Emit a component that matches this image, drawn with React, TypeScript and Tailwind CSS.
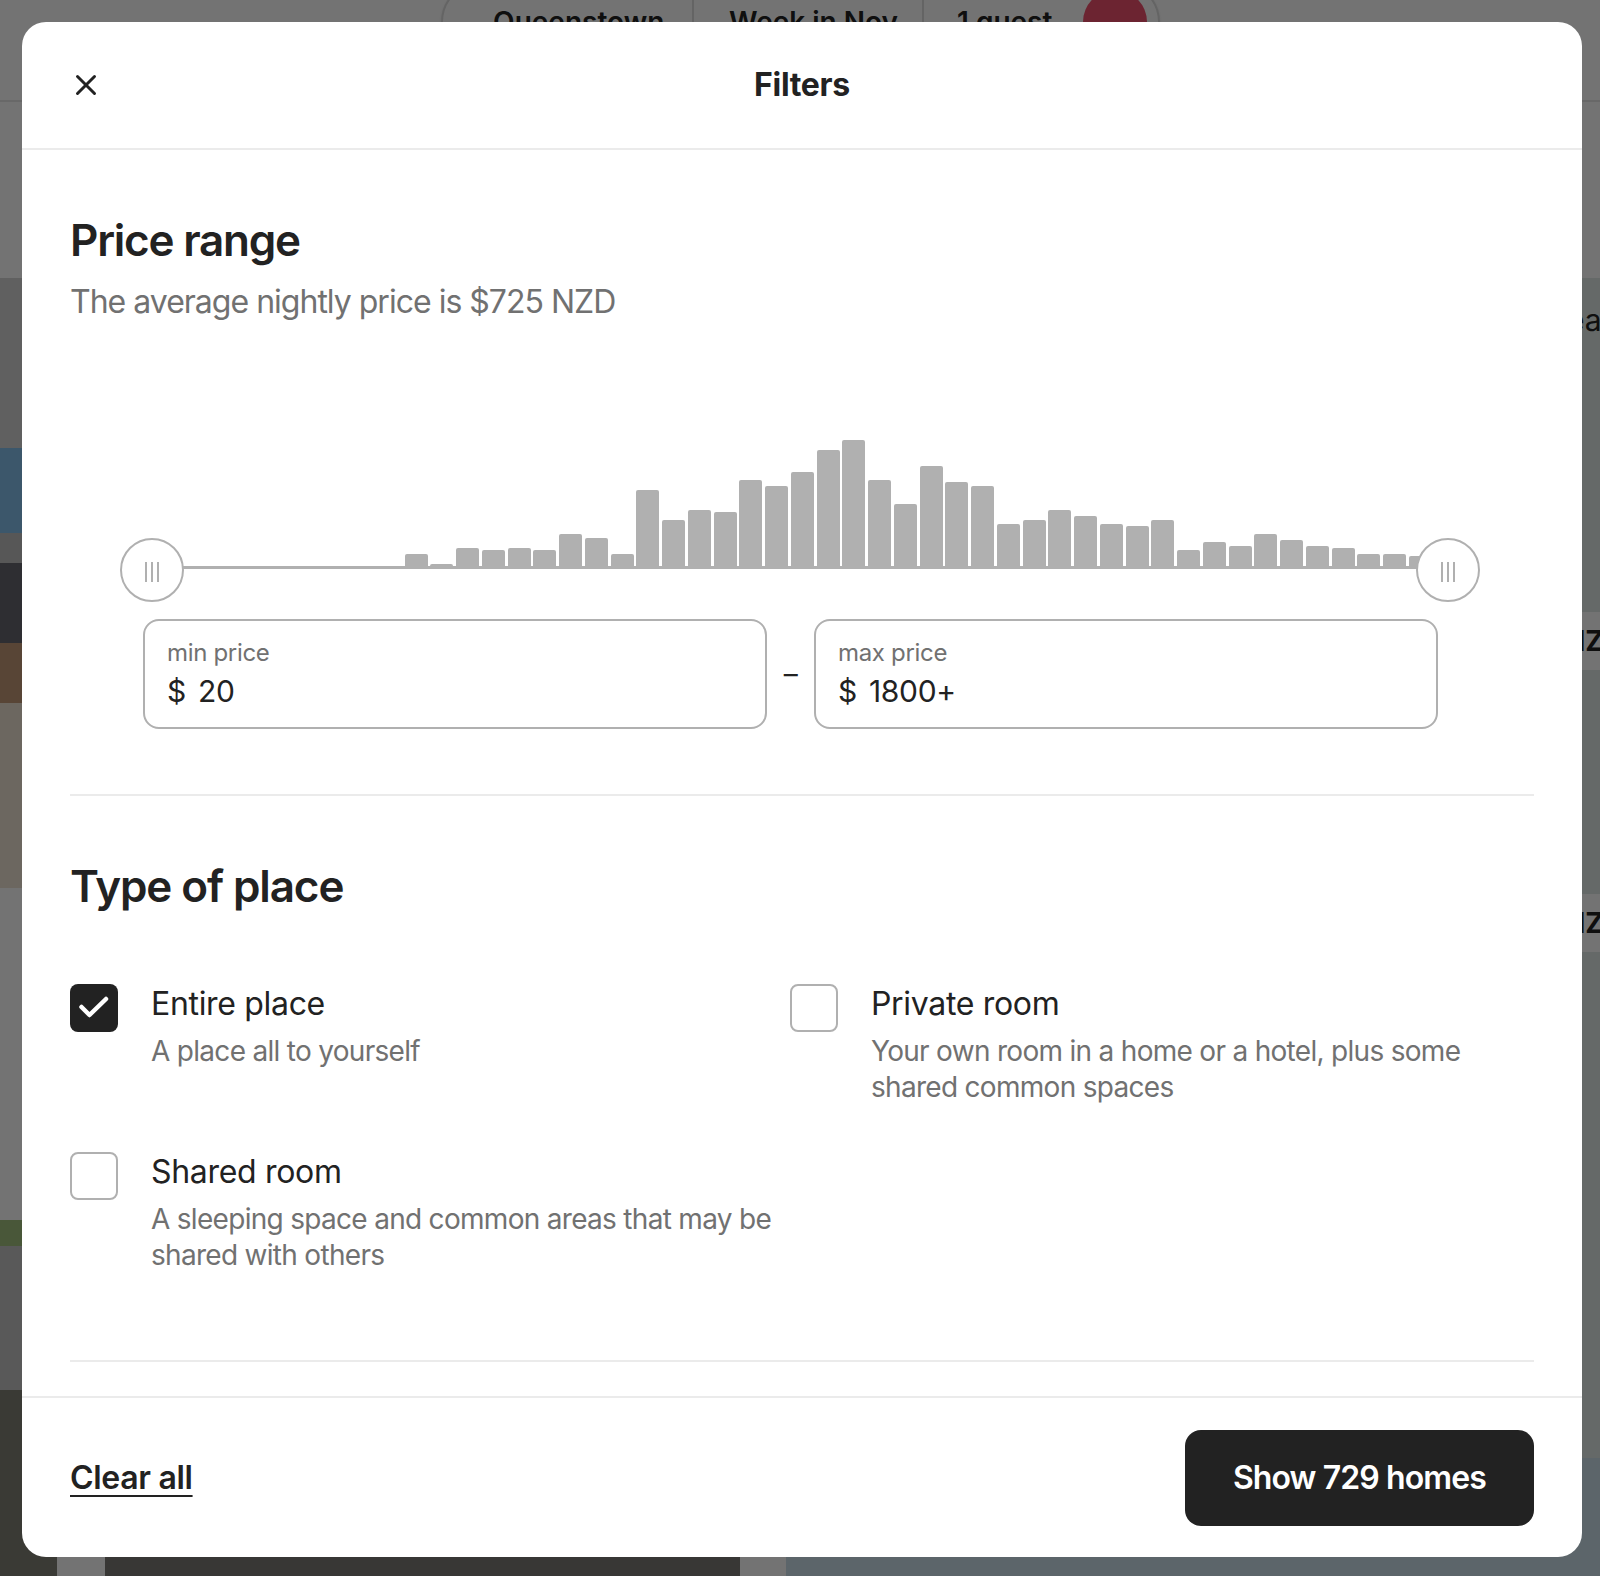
import { X } from "lucide-react";

const bars = [
  12, 2, 18, 16, 18, 16, 32, 28, 12, 76, 46, 56, 54, 86, 80, 94, 116, 126, 86,
  62, 100, 84, 80, 42, 46, 56, 50, 42, 40, 46, 16, 24, 20, 32, 26, 20, 18, 12,
  12, 10,
];

function Handle({ className }: { className: string }) {
  return (
    <div
      className={`absolute top-[102px] flex h-[64px] w-[64px] items-center justify-center gap-[4px] rounded-full border-2 border-[#b0b0b0] bg-white pt-[4px] ${className}`}
    >
      <span className="h-[20px] w-[2px] bg-[#b0b0b0]" />
      <span className="h-[20px] w-[2px] bg-[#b0b0b0]" />
      <span className="h-[20px] w-[2px] bg-[#b0b0b0]" />
    </div>
  );
}

function PriceBox({ label, value }: { label: string; value: string }) {
  return (
    <div className="h-[110px] flex-1 rounded-[16px] border-2 border-[#b0b0b0] px-[22px] pt-[16px]">
      <div className="text-[24px] leading-[32px] text-[#717171]">{label}</div>
      <div className="mt-[4px] flex gap-[12px] text-[30px] leading-[36px] text-[#222222]">
        <span>$</span>
        <span>{value}</span>
      </div>
    </div>
  );
}

function Option({
  title,
  lines,
  checked = false,
}: {
  title: string;
  lines: string[];
  checked?: boolean;
}) {
  return (
    <div className="flex gap-[33px]">
      {checked ? (
        <div className="flex h-[48px] w-[48px] shrink-0 items-center justify-center rounded-[8px] bg-[#222222]">
          <svg width="48" height="48" viewBox="0 0 48 48" fill="none">
            <path
              d="M11.5 23l8 8L36 15"
              stroke="white"
              strokeWidth="4.5"
              strokeLinecap="round"
              strokeLinejoin="round"
            />
          </svg>
        </div>
      ) : (
        <div className="h-[48px] w-[48px] shrink-0 rounded-[8px] border-2 border-[#b0b0b0]" />
      )}
      <div>
        <div className="text-[32px] leading-[40px] text-[#222222]">{title}</div>
        <div className="mt-[9px] whitespace-nowrap text-[28px] leading-[36px] tracking-[-0.025em] text-[#717171]">
          {lines.map((l) => (
            <div key={l}>{l}</div>
          ))}
        </div>
      </div>
    </div>
  );
}

function BackgroundPage() {
  return (
    <div className="h-full w-full">
      {/* top bar with search pill */}
      <header className="flex h-[102px] items-start border-b-2 border-[#e6e6e6]">
        <div className="ml-[441px] -mt-[18px] flex h-[80px] w-[719px] items-center rounded-full border-2 border-[#dddddd] text-[28px] font-semibold text-[#222222] shadow">
          <div className="w-[249px] pl-[50px]">Queenstown</div>
          <div className="h-[48px] w-[2px] bg-[#dddddd]" />
          <div className="w-[228px] pl-[35px]">Week in Nov</div>
          <div className="h-[48px] w-[2px] bg-[#dddddd]" />
          <div className="w-[159px] pl-[33px]">1 guest</div>
          <div className="h-[64px] w-[64px] rounded-full bg-[#f0506e]" />
        </div>
      </header>
      <div className="h-[176px]" />
      <div className="flex">
        {/* listings */}
        <div className="flex w-[786px] gap-[48px] overflow-hidden">
          <div className="-ml-[578px] w-[635px] shrink-0">
            <div className="flex h-[610px] flex-col overflow-hidden rounded-[24px]">
              <div className="h-[170px] bg-[#d6d6d6]" />
              <div className="h-[85px] bg-[#86c2ee]" />
              <div className="h-[30px] bg-[#c2c2c2]" />
              <div className="h-[80px] bg-[#66666f]" />
              <div className="h-[60px] bg-[#c49a78]" />
              <div className="flex-1 bg-[#f0e4d4]" />
            </div>
            <div className="mt-[26px] text-[30px] font-semibold leading-[40px] text-[#222222]">
              Nelson Lakes cottage
            </div>
            <div className="h-[266px]" />
            <div className="flex h-[610px] flex-col overflow-hidden rounded-[24px]">
              <div className="h-[26px] bg-[#a3c27f]" />
              <div className="h-[144px] bg-[#c6c6c6]" />
              <div className="flex-1 bg-[#818176]" />
            </div>
          </div>
          <div className="w-[635px] shrink-0">
            <div className="h-[610px] rounded-[24px] bg-[#cfcac2]" />
            <div className="h-[330px]" />
            <div className="h-[610px] rounded-[24px] bg-[#7d7a76]" />
          </div>
        </div>
        {/* map */}
        <div className="relative h-[1300px] flex-1 bg-[#dfe9e6]">
          <div className="absolute left-[764px] top-[20px] text-[30px] text-[#222222]">
            Lea
          </div>
          <div className="absolute left-[758px] top-[334px] rounded-full bg-white px-[20px] py-[8px] text-[28px] font-bold text-[#222222]">
            NZ$512
          </div>
          <div className="absolute left-[758px] top-[616px] rounded-full bg-white px-[20px] py-[8px] text-[28px] font-bold text-[#222222]">
            NZ$690
          </div>
          <div className="absolute bottom-0 left-0 h-[120px] w-full bg-[#cde0ea]" />
        </div>
      </div>
    </div>
  );
}

export default function App() {
  return (
    <div className="relative h-[1576px] w-[1600px] overflow-hidden bg-white font-['Inter','Noto_Sans',sans-serif]">
      <BackgroundPage />

      <div className="absolute inset-0 bg-black/[0.55] pl-[22px] pt-[22px]">
        <div className="flex h-[1535px] w-[1560px] flex-col overflow-hidden rounded-[24px] bg-white tracking-[-0.02em]">
          {/* header */}
          <header className="grid h-[128px] shrink-0 grid-cols-[1fr_auto_1fr] items-center border-b-2 border-[#ebebeb] px-[32px]">
            <button className="flex h-[64px] w-[64px] items-center justify-center rounded-full text-[#222222]">
              <X size={34} strokeWidth={2.1} />
            </button>
            <h1 className="text-[32px] font-bold text-[#222222]">Filters</h1>
            <div />
          </header>

          {/* body */}
          <div className="flex-1 overflow-hidden px-[48px]">
            {/* price range */}
            <section className="border-b-2 border-[#ebebeb] pb-[65px] pt-[64px]">
              <h2 className="text-[44px] font-semibold leading-[52px] tracking-[-0.028em] text-[#222222]">
                Price range
              </h2>
              <p className="mt-[16px] text-[32px] leading-[40px] tracking-[-0.031em] text-[#717171]">
                The average nightly price is $725 NZD
              </p>

              <div className="relative mt-[114px]">
                <div className="ml-[334.5px] flex h-[130px] items-end gap-[2.75px]">
                  {bars.map((h, i) => (
                    <div
                      key={i}
                      className="w-[23px] rounded-t-[2px] bg-[#b0b0b0]"
                      style={{ height: h }}
                    />
                  ))}
                </div>
                <div className="ml-[82px] mr-[86px] h-[3px] bg-[#b0b0b0]" />
                <Handle className="left-[50px]" />
                <Handle className="right-[54px]" />
              </div>

              <div className="ml-[73px] mr-[96px] mt-[50px] flex items-center">
                <PriceBox label="min price" value="20" />
                <div className="flex w-[47px] justify-center text-[28px] text-[#222222]">
                  –
                </div>
                <PriceBox label="max price" value="1800+" />
              </div>
            </section>

            {/* type of place */}
            <section className="border-b-2 border-[#ebebeb] pb-[87px] pt-[64px]">
              <h2 className="text-[44px] font-semibold leading-[52px] tracking-[-0.025em] text-[#222222]">
                Type of place
              </h2>
              <div className="mt-[72px] grid grid-cols-[720px_1fr] gap-y-[47px]">
                <Option
                  checked
                  title="Entire place"
                  lines={["A place all to yourself"]}
                />
                <Option
                  title="Private room"
                  lines={[
                    "Your own room in a home or a hotel, plus some",
                    "shared common spaces",
                  ]}
                />
                <Option
                  title="Shared room"
                  lines={[
                    "A sleeping space and common areas that may be",
                    "shared with others",
                  ]}
                />
              </div>
            </section>
          </div>

          {/* footer */}
          <footer className="flex h-[161px] shrink-0 items-center justify-between border-t-2 border-[#ebebeb] px-[48px]">
            <button className="text-[32px] font-semibold text-[#222222] underline decoration-2 underline-offset-[6px]">
              Clear all
            </button>
            <button className="h-[96px] rounded-[16px] bg-[#222222] px-[48px] text-[32px] font-semibold tracking-[-0.028em] text-white">
              Show 729 homes
            </button>
          </footer>
        </div>
      </div>
    </div>
  );
}
